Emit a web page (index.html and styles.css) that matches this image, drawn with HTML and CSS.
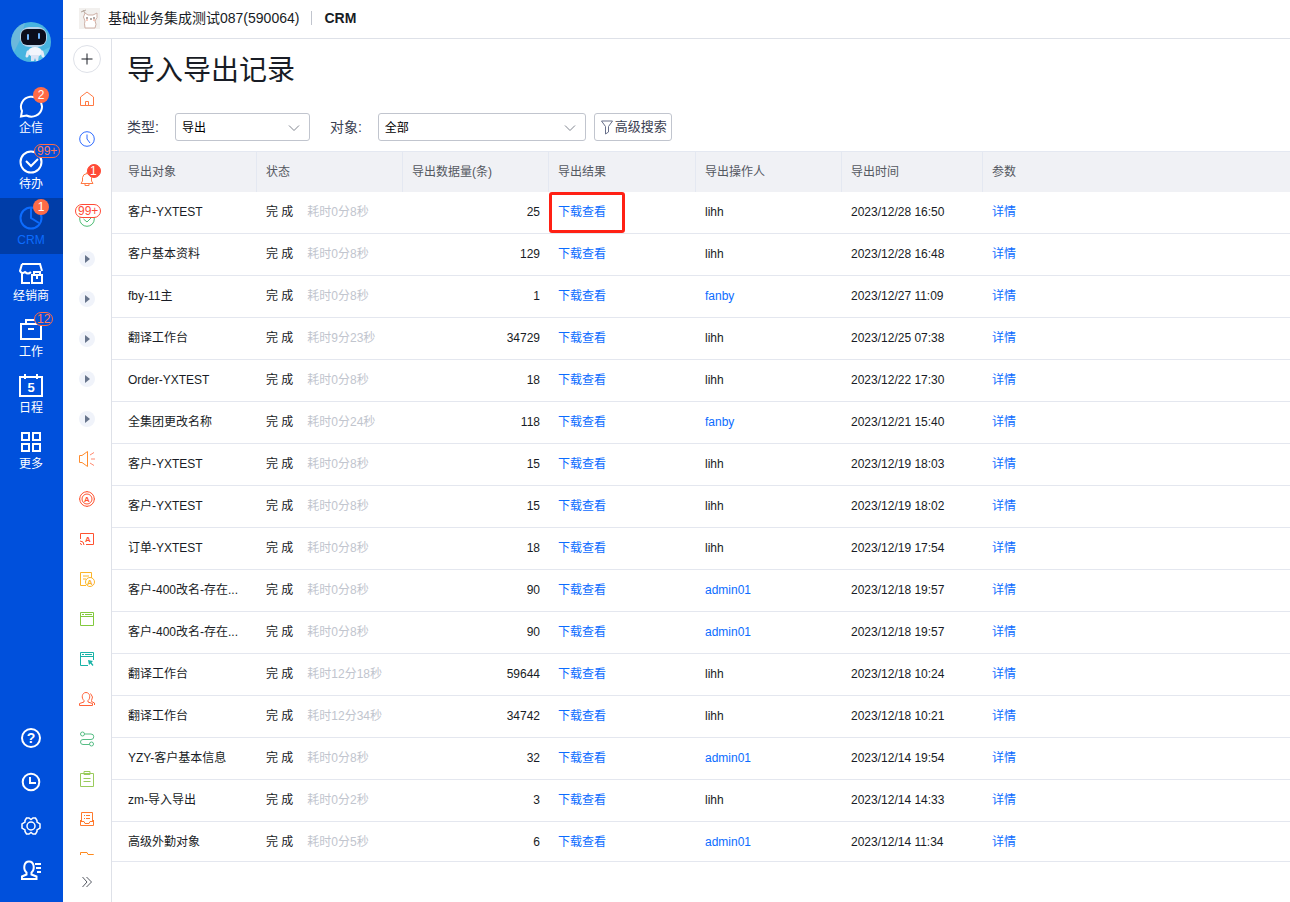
FILE: index.html
```html
<!DOCTYPE html>
<html lang="zh-CN">
<head>
  <meta charset="utf-8">
  <title>导入导出记录</title>
  <link rel="stylesheet" href="styles.css">
</head>
<body>
  <div class="app">
    <nav class="sidebar">
      <svg class="avatar" viewBox="0 0 40 40">
        <circle cx="20" cy="20" r="20" fill="#48b4e0"/>
        <path d="M3 30A20 20 0 0 1 14 1L9 18z" fill="#6cb9dc"/>
        <path d="M24 40a20 20 0 0 0 15-15l-8 4z" fill="#5dc3e8"/>
        <rect x="9" y="5" width="27" height="20" rx="9" fill="#b9d3ea"/>
        <rect x="10" y="7" width="25" height="16" rx="6" fill="#0b0d1c"/>
        <rect x="16" y="12" width="2" height="6" rx="1" fill="#6fb6ff"/>
        <rect x="27" y="11" width="2" height="6" rx="1" fill="#6fb6ff"/>
        <ellipse cx="24" cy="30" rx="7" ry="5" fill="#f3f5fc"/>
        <path d="M17 30l-1 4M31 30l1 4" stroke="#e6ecf8" stroke-width="3" stroke-linecap="round"/>
        <path d="M20 33h8l-1 6h-2l-1-3-1 3h-3z" fill="#dbe4f5"/>
      </svg>
      <a class="nav-item" href="#">
        <svg class="nav-icon" viewBox="0 0 24 24"><path d="M2 22.500l1-5.500a10.500 10 0 1 1 4.500 4.500z"/></svg>
        <span>企信</span>
        <b class="badge badge-dot">2</b>
      </a>
      <a class="nav-item" href="#">
        <svg class="nav-icon" viewBox="0 0 24 24"><circle cx="12" cy="12" r="10.500"/><path d="M7 11l5 5 7-7"/></svg>
        <span>待办</span>
        <b class="badge badge-pill">99+</b>
      </a>
      <a class="nav-item active" href="#">
        <svg class="nav-icon" viewBox="0 0 24 24"><circle cx="12" cy="12" r="10.500"/><path d="M12 2v10l8 5"/></svg>
        <span>CRM</span>
        <b class="badge badge-dot">1</b>
      </a>
      <a class="nav-item" href="#">
        <svg class="nav-icon" viewBox="0 0 24 24"><path d="M11 21H3V11M3 2h18l2 7M3 2L1 9q2 3.500 5 1 3 3 6 0M13 13h10v8H13zM15 13v-3h6v3M18 13v4"/></svg>
        <span>经销商</span>
      </a>
      <a class="nav-item" href="#">
        <svg class="nav-icon" viewBox="0 0 24 24"><path d="M2 6h20v15H2zM7 6V2h10v4M9 11h6"/></svg>
        <span>工作</span>
        <b class="badge badge-pill badge-work">12</b>
      </a>
      <a class="nav-item" href="#">
        <svg class="nav-icon" viewBox="0 0 24 24"><path d="M1 3h22v19H1zM6 0v5M18 0v5"/><text x="12" y="18" text-anchor="middle">5</text></svg>
        <span>日程</span>
      </a>
      <a class="nav-item" href="#">
        <svg class="nav-icon" viewBox="0 0 24 24"><path d="M3 3h7v7H3zM14 3h7v7h-7zM3 14h7v7H3zM14 14h7v7h-7z"/></svg>
        <span>更多</span>
      </a>
      <div class="nav-tools">
        <a href="#" aria-label="帮助"><svg class="nav-icon" viewBox="0 0 24 24"><circle cx="12" cy="12" r="9"/><text class="question" x="12" y="17" text-anchor="middle">?</text></svg></a>
        <a href="#" aria-label="历史"><svg class="nav-icon" viewBox="0 0 24 24"><circle cx="12" cy="12" r="8.300"/><path d="M11 7v6h6"/></svg></a>
        <a href="#" aria-label="设置"><svg class="nav-icon gear" viewBox="0 0 24 24"><path d="M7.500 4h2.500l2 1.500L14 4h2.500l1.500 2.500v1.500l3 2v4l-3 2v1.500L16.500 20H14l-2-1.500-2 1.500H7.500L6 17.500V16l-3-2v-4l3-2V6.500z"/><circle cx="12" cy="12" r="4"/></svg></a>
        <a href="#" aria-label="通讯录"><svg class="nav-icon" viewBox="0 0 24 24"><path d="M7.500 14.500c-3.500-3-3-11 2.500-11s6 8 2.500 11v2l5 2V21H3v-2.500l4.500-2zM16 6h6M17 10h5M18 14h4"/></svg></a>
      </div>
    </nav>

    <div class="main">
      <header class="topbar">
        <svg class="logo" viewBox="0 0 21 21">
          <rect width="21" height="21" fill="#f2f0ee"/>
          <path d="M6 20q-1-5 0-7Q3 9 6 5l3 2h5l4-2q1 5-2 8 2 3 0 7z" fill="#fff" stroke="#cdb0a6"/>
          <path d="M2 4l5-2M4 2l2 3" stroke="#b5a69c"/>
          <path d="M8 9v2M15 9v2M11 11h2" stroke="#665650"/>
          <circle cx="8" cy="12" r="1" fill="#f5b8a8"/><circle cx="15" cy="12" r="1" fill="#f5b8a8"/>
        </svg>
        <span class="company">基础业务集成测试087(590064)</span>
        <span class="divider"></span>
        <b class="product">CRM</b>
      </header>

      <div class="body">
        <aside class="rail">
          <button class="add" aria-label="新建"><svg viewBox="0 0 16 16"><path d="M8 2.500v11M2.500 8h11"/></svg></button>
          <div class="rail-list">
            <a href="#"><svg viewBox="0 0 16 16" stroke="#ff7a45"><path d="M1.500 14.500V6L8 1l6.500 5v8.500zM6.500 14.500v-4h3v4"/></svg></a>
            <a href="#"><svg viewBox="0 0 16 16" stroke="#2e6bff"><circle cx="8" cy="8" r="7.300"/><path d="M8 3.500V8l3 4"/></svg></a>
            <a href="#"><svg viewBox="0 0 16 16" stroke="#ff7a45"><path d="M2 12.500h12L12.500 10V6.500Q12 3 8 2.500 4 3 3.500 6.500V10zM8 1v1.500M6 13v1.500h4V13"/></svg><b class="rail-badge solid">1</b></a>
            <a href="#"><svg viewBox="0 0 16 16" stroke="#4dbd74"><circle cx="8" cy="8" r="7.300"/><path d="M4.500 8L8 11l4-4"/></svg><b class="rail-badge">99+</b></a>
            <a href="#"><i class="fold"></i></a>
            <a href="#"><i class="fold"></i></a>
            <a href="#"><i class="fold"></i></a>
            <a href="#"><i class="fold"></i></a>
            <a href="#"><i class="fold"></i></a>
            <a href="#"><svg viewBox="0 0 16 16" stroke="#ff8c2e"><path d="M.5 4.500v7H3L8.500 15.500V.5L3 4.500z"/><path d="M11 4l4-2.500M12 8h4M11 12l4 2.500" stroke="#ff8a70"/></svg></a>
            <a href="#"><svg viewBox="0 0 16 16" stroke="#ff5330"><circle cx="8" cy="8" r="7.300"/><circle cx="8" cy="8" r="5"/><path d="M8 0v1M8 15v1M0 8h1M15 8h1"/><text x="8" y="11" text-anchor="middle" fill="#ff5330">A</text></svg></a>
            <a href="#"><svg viewBox="0 0 16 16" stroke="#ff5230"><path d="M1.500 8V2.500h13v11H7M1 10q4 0 4 4M1 12.500q1.500 0 1.500 1.500"/><text x="9" y="11" text-anchor="middle" fill="#ff5230">A</text></svg></a>
            <a href="#"><svg viewBox="0 0 16 16" stroke="#fbb42a"><path d="M7 14.500H1.500v-13h11V7M4 5h6M4 8h3"/><circle cx="11" cy="11" r="4.500"/><text x="11" y="14" text-anchor="middle" fill="#fbb42a">A</text></svg></a>
            <a href="#"><svg viewBox="0 0 16 16" stroke="#82c93e"><path d="M1.500 1.500h13v13h-13zM1.500 5.500h13M3 3.500h2M6 3.500h7"/></svg></a>
            <a href="#"><svg viewBox="0 0 16 16" stroke="#19b3a6"><path d="M9 14.500H1.500v-13h13V9M1.500 5.500h13M3 3.500h2M6 3.500h7"/><path d="M9 9l5 1-1.500 1.500 2 2.500-1 1-2-2.500L10 14z" fill="#19b3a6" stroke="none"/></svg></a>
            <a href="#"><svg viewBox="0 0 16 16" stroke="#ff6238"><path d="M5 9.500C2 7 3 1.500 7 1.500s5 5.500 2 8v1.500l4.500 1.500v2H.5v-2L5 11zM11.500 2.500q3.500 3.500 1 7v1l3 1.500v2"/></svg></a>
            <a href="#"><svg viewBox="0 0 16 16" stroke="#56bd84"><circle cx="3.500" cy="3" r="2"/><circle cx="12.500" cy="13" r="2"/><path d="M5.500 3h6.500a2.500 2.500 0 0 1 0 5.500H4a2.500 2.500 0 0 0 0 5h6.500"/></svg></a>
            <a href="#"><svg viewBox="0 0 16 16" stroke="#9acb5c"><path d="M1.500 2.500h13v13h-13zM5 .5h6v3H5zM4.500 7.500h7M4.500 10.500h7"/></svg></a>
            <a href="#"><svg viewBox="0 0 16 16" stroke="#ff7a2e"><path d="M2.500 10V1.500h11V10M1.500 9v5.500h13V9M1.500 10.500H5l1 2h4l1-2h3.500M5 4.500h1M7 4.500h4M5 7.500h1M7 7.500h4"/></svg></a>
            <a href="#"><svg viewBox="0 0 16 16" stroke="#ff8a1e"><path d="M1.500 14V1.500H8l1 2h5.500V14z"/></svg></a>
          </div>
          <a class="expand" href="#" aria-label="展开"><svg viewBox="0 0 16 16"><path d="M3.500 3l4.500 5-4.500 5M7.500 3l5 5-5 5"/></svg></a>
        </aside>

        <main class="content">
          <h1>导入导出记录</h1>
          <form class="filters">
            <label for="type">类型:</label>
            <div class="select select-type">
              <select id="type"><option>导出</option></select>
              <svg viewBox="0 0 12 8"><path d="M1 1.500l5 5 5-5"/></svg>
            </div>
            <label for="object">对象:</label>
            <div class="select select-object">
              <select id="object"><option>全部</option></select>
              <svg viewBox="0 0 12 8"><path d="M1 1.500l5 5 5-5"/></svg>
            </div>
            <button type="button" class="search"><svg viewBox="0 0 14 16"><path d="M1.500 2h11L8.500 7.500V13l-3 2V7.500z"/></svg>高级搜索</button>
          </form>

          <table>
            <colgroup>
              <col class="col-name"><col class="col-mid"><col class="col-mid"><col class="col-result"><col class="col-mid"><col class="col-time"><col>
            </colgroup>
            <thead>
              <tr><th>导出对象</th><th>状态</th><th>导出数据量(条)</th><th>导出结果</th><th>导出操作人</th><th>导出时间</th><th>参数</th></tr>
            </thead>
            <tbody>
              <tr><td>客户-YXTEST</td><td>完 成<span class="cost">耗时0分8秒</span></td><td class="num">25</td><td class="marked"><a href="#">下载查看</a></td><td>lihh</td><td>2023/12/28 16:50</td><td><a href="#">详情</a></td></tr>
              <tr><td>客户基本资料</td><td>完 成<span class="cost">耗时0分8秒</span></td><td class="num">129</td><td><a href="#">下载查看</a></td><td>lihh</td><td>2023/12/28 16:48</td><td><a href="#">详情</a></td></tr>
              <tr><td>fby-11主</td><td>完 成<span class="cost">耗时0分8秒</span></td><td class="num">1</td><td><a href="#">下载查看</a></td><td><a href="#">fanby</a></td><td>2023/12/27 11:09</td><td><a href="#">详情</a></td></tr>
              <tr><td>翻译工作台</td><td>完 成<span class="cost">耗时9分23秒</span></td><td class="num">34729</td><td><a href="#">下载查看</a></td><td>lihh</td><td>2023/12/25 07:38</td><td><a href="#">详情</a></td></tr>
              <tr><td>Order-YXTEST</td><td>完 成<span class="cost">耗时0分8秒</span></td><td class="num">18</td><td><a href="#">下载查看</a></td><td>lihh</td><td>2023/12/22 17:30</td><td><a href="#">详情</a></td></tr>
              <tr><td>全集团更改名称</td><td>完 成<span class="cost">耗时0分24秒</span></td><td class="num">118</td><td><a href="#">下载查看</a></td><td><a href="#">fanby</a></td><td>2023/12/21 15:40</td><td><a href="#">详情</a></td></tr>
              <tr><td>客户-YXTEST</td><td>完 成<span class="cost">耗时0分8秒</span></td><td class="num">15</td><td><a href="#">下载查看</a></td><td>lihh</td><td>2023/12/19 18:03</td><td><a href="#">详情</a></td></tr>
              <tr><td>客户-YXTEST</td><td>完 成<span class="cost">耗时0分8秒</span></td><td class="num">15</td><td><a href="#">下载查看</a></td><td>lihh</td><td>2023/12/19 18:02</td><td><a href="#">详情</a></td></tr>
              <tr><td>订单-YXTEST</td><td>完 成<span class="cost">耗时0分8秒</span></td><td class="num">18</td><td><a href="#">下载查看</a></td><td>lihh</td><td>2023/12/19 17:54</td><td><a href="#">详情</a></td></tr>
              <tr><td>客户-400改名-存在...</td><td>完 成<span class="cost">耗时0分8秒</span></td><td class="num">90</td><td><a href="#">下载查看</a></td><td><a href="#">admin01</a></td><td>2023/12/18 19:57</td><td><a href="#">详情</a></td></tr>
              <tr><td>客户-400改名-存在...</td><td>完 成<span class="cost">耗时0分8秒</span></td><td class="num">90</td><td><a href="#">下载查看</a></td><td><a href="#">admin01</a></td><td>2023/12/18 19:57</td><td><a href="#">详情</a></td></tr>
              <tr><td>翻译工作台</td><td>完 成<span class="cost">耗时12分18秒</span></td><td class="num">59644</td><td><a href="#">下载查看</a></td><td>lihh</td><td>2023/12/18 10:24</td><td><a href="#">详情</a></td></tr>
              <tr><td>翻译工作台</td><td>完 成<span class="cost">耗时12分34秒</span></td><td class="num">34742</td><td><a href="#">下载查看</a></td><td>lihh</td><td>2023/12/18 10:21</td><td><a href="#">详情</a></td></tr>
              <tr><td>YZY-客户基本信息</td><td>完 成<span class="cost">耗时0分8秒</span></td><td class="num">32</td><td><a href="#">下载查看</a></td><td><a href="#">admin01</a></td><td>2023/12/14 19:54</td><td><a href="#">详情</a></td></tr>
              <tr><td>zm-导入导出</td><td>完 成<span class="cost">耗时0分2秒</span></td><td class="num">3</td><td><a href="#">下载查看</a></td><td>lihh</td><td>2023/12/14 14:33</td><td><a href="#">详情</a></td></tr>
              <tr><td>高级外勤对象</td><td>完 成<span class="cost">耗时0分5秒</span></td><td class="num">6</td><td><a href="#">下载查看</a></td><td><a href="#">admin01</a></td><td>2023/12/14 11:34</td><td><a href="#">详情</a></td></tr>
            </tbody>
          </table>
        </main>
      </div>
    </div>
  </div>
</body>
</html>
```
FILE: styles.css
```css
*,
*::before,
*::after {
  box-sizing: border-box;
}

body {
  margin: 0;
  background: #fff;
  color: #181c25;
  font: 12px/20px "Liberation Sans", Arial, "Noto Sans CJK SC", sans-serif;
}

a {
  color: #0c6cff;
  text-decoration: none;
}

svg {
  display: block;
  fill: none;
}

.app {
  display: flex;
  height: 100vh;
  overflow: hidden;
}

/* 左侧主导航 */
.sidebar {
  display: flex;
  flex-direction: column;
  flex: none;
  width: 63px;
  background: #0050dc;
}

.avatar {
  width: 40px;
  height: 40px;
  margin: 22px 11px 24px;
}

.nav-item {
  position: relative;
  display: flex;
  flex-direction: column;
  align-items: center;
  height: 56px;
  padding: 8px 1px 0 0;
  color: #fff;
}

.nav-item.active {
  background: #003da8;
  color: #0c6cff;
}

.nav-icon {
  width: 24px;
  height: 24px;
  stroke: currentColor;
  stroke-width: 2;
}

.nav-icon.gear {
  stroke-width: 1.5;
}

.nav-icon text {
  fill: currentColor;
  stroke: none;
  font-size: 13px;
  font-weight: bold;
}

.nav-icon .question {
  font-size: 14px;
}

.badge {
  position: absolute;
  top: 2px;
  left: 34px;
  height: 14px;
  font-weight: normal;
  line-height: 12px;
  text-align: center;
}

.badge-dot {
  top: 1px;
  left: 33px;
  width: 16px;
  height: 16px;
  border-radius: 8px;
  background: #ff6b47;
  color: #fff;
  line-height: 16px;
}

.badge-pill {
  padding: 0 2px;
  border: 1px solid #ff6b47;
  border-radius: 7px;
  background: #0050dc;
  color: #ff7a5c;
}

.nav-tools {
  margin-top: auto;
  padding-bottom: 10px;
}

.nav-tools a {
  display: flex;
  align-items: center;
  justify-content: center;
  height: 44px;
  padding-right: 1px;
  color: #fff;
}

.main {
  display: flex;
  flex-direction: column;
  flex: 1;
  min-width: 0;
}

.topbar {
  display: flex;
  align-items: center;
  flex: none;
  height: 39px;
  padding: 0 16px 2px;
  border-bottom: 1px solid #dee1e8;
  font-size: 14px;
}

.logo {
  width: 21px;
  height: 21px;
  margin-right: 8px;
}

.divider {
  width: 1px;
  height: 14px;
  margin: 0 12px;
  background: #c1c5ce;
}

.body {
  display: flex;
  flex: 1;
  min-height: 0;
}

/* 图标栏 */
.rail {
  display: flex;
  flex-direction: column;
  align-items: center;
  flex: none;
  width: 49px;
  border-right: 1px solid #dee1e8;
}

.rail svg {
  width: 16px;
  height: 16px;
}

.rail text {
  stroke: none;
  font-size: 8px;
  font-weight: bold;
}

.add {
  display: flex;
  align-items: center;
  justify-content: center;
  flex: none;
  width: 28px;
  height: 28px;
  margin: 6px 0;
  padding: 0;
  border: 1px solid #dee1e8;
  border-radius: 14px;
  background: #fff;
  stroke: #181c25;
}

.rail-list {
  flex: 1;
  min-height: 0;
  overflow: hidden;
}

.rail-list a {
  position: relative;
  display: flex;
  align-items: center;
  justify-content: center;
  width: 48px;
  height: 40px;
}

.rail-badge {
  position: absolute;
  top: 5px;
  left: 12px;
  height: 14px;
  padding: 0 2px;
  border: 1px solid #ff4a36;
  border-radius: 7px;
  background: #fff;
  color: #ff4a36;
  font-weight: normal;
  line-height: 12px;
}

.rail-badge.solid {
  left: 24px;
  width: 14px;
  background: #ff4a36;
  color: #fff;
}

.fold {
  display: flex;
  align-items: center;
  justify-content: center;
  width: 16px;
  height: 16px;
  border-radius: 8px;
  background: #f0f3fa;
}

.fold::before {
  content: "";
  border: 4px solid transparent;
  border-left: 5px solid #68758c;
  border-right: 0;
}

.expand {
  flex: none;
  height: 47px;
  padding-top: 19px;
  stroke: #545861;
}

.content {
  flex: 1;
  min-width: 0;
}

h1 {
  margin: 0;
  padding: 12px 15px 0;
  font-size: 28px;
  font-weight: normal;
  line-height: 40px;
}

.filters {
  display: flex;
  align-items: center;
  padding: 22px 15px 10px;
}

.filters label {
  color: #3b4152;
  font-size: 14px;
}

.select {
  position: relative;
  height: 28px;
}

.select-type {
  width: 135px;
  margin: 0 20px 0 16px;
}

.select-object {
  width: 208px;
  margin: 0 8px 0 16px;
}

.select select {
  width: 100%;
  height: 28px;
  padding: 2px 6px 0;
  border: 1px solid #c1c5ce;
  border-radius: 3px;
  background: #fff;
  color: #000;
  font: inherit;
  appearance: none;
}

.select svg {
  position: absolute;
  top: 11px;
  right: 10px;
  width: 12px;
  height: 8px;
  stroke: #80858f;
  pointer-events: none;
}

.search {
  display: flex;
  align-items: center;
  height: 28px;
  padding: 0 4px 0 5px;
  border: 1px solid #c1c5ce;
  border-radius: 3px;
  background: #fff;
  color: #3b4152;
  font: inherit;
  font-size: 13px;
}

.search svg {
  width: 14px;
  height: 16px;
  margin-right: 1px;
  stroke: #68708a;
}

/* 记录列表 */
table {
  width: 100%;
  border-collapse: separate;
  border-spacing: 0;
  table-layout: fixed;
}

.col-name {
  width: 145px;
}

.col-mid {
  width: 146px;
}

.col-result {
  width: 147px;
}

.col-time {
  width: 141px;
}

th {
  height: 41px;
  padding: 0 9px;
  border-top: 1px solid #e4e8f1;
  border-right: 1px solid #e4e8f1;
  background: #f0f1f5;
  color: #545861;
  font-weight: normal;
  text-align: left;
}

td {
  height: 42px;
  padding: 0 9px 2px;
  border-bottom: 1px solid #e4e7ef;
  white-space: nowrap;
}

th:first-child,
td:first-child {
  padding-left: 16px;
}

th:last-child {
  border-right: 0;
}

tbody tr:last-child td {
  height: 40px;
  padding-bottom: 0;
}

.num {
  text-align: right;
}

.cost {
  margin-left: 14px;
  color: #c1c5ce;
}

/* 首行下载入口的标记框 */
.marked {
  position: relative;
}

.marked::after {
  content: "";
  position: absolute;
  top: 0;
  left: 0;
  width: 76px;
  height: 41px;
  border: 3px solid #ff2014;
  border-radius: 3px;
  pointer-events: none;
}
```
